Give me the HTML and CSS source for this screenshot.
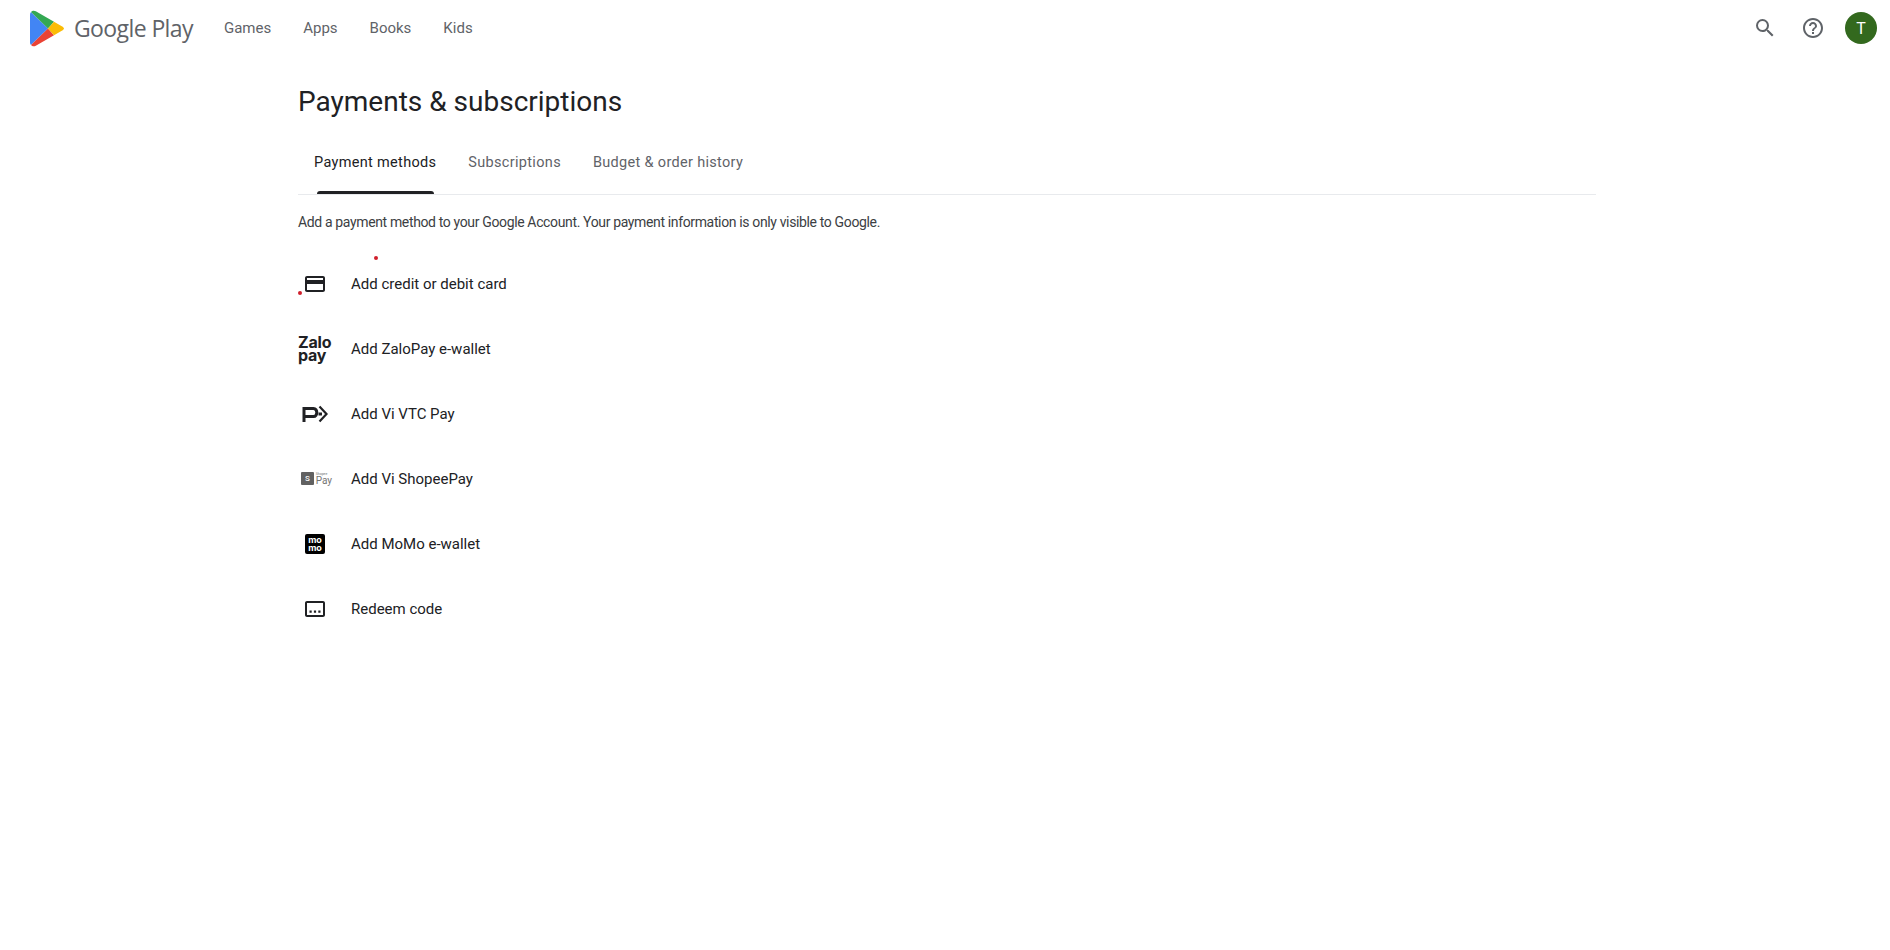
FILE: index.html
```html
<!DOCTYPE html>
<html lang="en">
<head>
<meta charset="utf-8">
<title>Payments &amp; subscriptions</title>
<link rel="stylesheet" href="styles.css">
</head>
<body>
<header class="topbar">
  <a class="brand">
    <svg class="play-logo" viewBox="0 0 34 37" width="34" height="37">
      <path fill="#4285f4" d="M1 1.900C.4 2.600 0 3.600 0 4.600v27.800c0 1 .4 2 1 2.700l17-16.600z"/>
      <path fill="#34a853" d="M1 1.900C2.200.6 4.100.2 5.800 1.200L24 11.700 18 18.500z"/>
      <path fill="#ea4335" d="M1 35.100c1.200 1.300 3.100 1.700 4.800.7L24 25.300l-6-6.800z"/>
      <path fill="#fbbc04" d="M24 11.700l7.800 4.500c2.900 1.700 2.900 3 0 4.600L24 25.300 18 18.500z"/>
    </svg>
    <span class="wordmark">Google Play</span>
  </a>
  <nav class="mainnav">
    <a>Games</a><a>Apps</a><a>Books</a><a>Kids</a>
  </nav>
  <div class="actions">
    <svg class="action-icon" viewBox="0 0 24 24" width="24" height="24"><path fill="#5f6368" d="M15.500 14h-.79l-.28-.27A6.470 6.470 0 0 0 16 9.500 6.500 6.500 0 1 0 9.500 16c1.610 0 3.090-.59 4.230-1.570l.27.28v.79l5 4.990L20.490 19l-4.990-5zm-6 0C7.010 14 5 11.990 5 9.500S7.010 5 9.500 5 14 7.010 14 9.500 11.990 14 9.500 14z"/></svg>
    <svg class="action-icon" viewBox="0 0 24 24" width="24" height="24"><path fill="#5f6368" d="M11 18h2v-2h-2v2zm1-16C6.480 2 2 6.480 2 12s4.480 10 10 10 10-4.480 10-10S17.520 2 12 2zm0 18c-4.410 0-8-3.590-8-8s3.590-8 8-8 8 3.590 8 8-3.590 8-8 8zm0-14c-2.210 0-4 1.790-4 4h2c0-1.100.9-2 2-2s2 .9 2 2c0 2-3 1.750-3 5h2c0-2.250 3-2.500 3-5 0-2.210-1.790-4-4-4z"/></svg>
    <span class="avatar">T</span>
  </div>
</header>
<main class="page">
  <h1 class="title">Payments &amp; subscriptions</h1>
  <div class="tabs">
    <a class="tab active">Payment methods</a>
    <a class="tab">Subscriptions</a>
    <a class="tab">Budget &amp; order history</a>
  </div>
  <p class="intro">Add a payment method to your Google Account. Your payment information is only visible to Google.</p>
  <ul class="methods">
    <li class="method">
      <span class="method-icon">
        <svg viewBox="0 0 24 24" width="24" height="24"><path fill="#202124" d="M20 4H4c-1.110 0-1.990.89-1.990 2L2 18c0 1.110.89 2 2 2h16c1.110 0 2-.89 2-2V6c0-1.110-.89-2-2-2zm0 14H4v-6h16v6zm0-10H4V6h16v2z"/></svg>
      </span>
      <span>Add credit or debit card</span>
    </li>
    <li class="method">
      <span class="method-icon zalo"><span>Zalo</span><span>pay</span></span>
      <span>Add ZaloPay e-wallet</span>
    </li>
    <li class="method">
      <span class="method-icon">
        <svg viewBox="0 0 28 18" width="28" height="18"><path fill="none" stroke="#202124" stroke-width="3" d="M3 17V3.500h9.500c4.400 0 4.400 8 0 8H3"/><path fill="none" stroke="#202124" stroke-width="2.200" d="M18.500 1.500 25.500 9l-7 7.500"/><path fill="#202124" d="M17.500 7.500h3.500v3h-3.500z"/></svg>
      </span>
      <span>Add Vi VTC Pay</span>
    </li>
    <li class="method">
      <span class="method-icon shopee">
        <span class="shopee-bag">S</span>
        <span class="shopee-text"><small>Shopee</small><b>Pay</b></span>
      </span>
      <span>Add Vi ShopeePay</span>
    </li>
    <li class="method">
      <span class="method-icon"><span class="momo"><span>mo</span><span>mo</span></span></span>
      <span>Add MoMo e-wallet</span>
    </li>
    <li class="method">
      <span class="method-icon">
        <svg viewBox="0 0 24 24" width="24" height="24"><path fill="#202124" d="M20 4H4c-1.100 0-2 .9-2 2v12c0 1.100.9 2 2 2h16c1.100 0 2-.9 2-2V6c0-1.100-.9-2-2-2zm0 14H4V6h16v12z"/><path fill="#202124" d="M6.500 13.500h2.200v2.200H6.500zM10.900 13.500h2.200v2.200h-2.200zM15.300 13.500h2.200v2.200h-2.200z"/></svg>
      </span>
      <span>Redeem code</span>
    </li>
    <li class="dot dot-a"></li>
    <li class="dot dot-b"></li>
  </ul>
</main>
</body>
</html>
```
FILE: styles.css
```css
* { box-sizing: border-box; }
html, body { margin: 0; height: 100%; background: #fff; overflow: hidden; }
body { font-family: Roboto, "Liberation Sans", sans-serif; color: #202124; }
.topbar { display: flex; align-items: center; height: 56px; padding: 0 13px 0 30px; }
.brand { display: flex; align-items: center; gap: 10px; }
.play-logo { display: block; }
.wordmark { font-family: "Open Sans", sans-serif; font-size: 23px; color: #5f6368; letter-spacing: -0.6px; }
.mainnav { display: flex; gap: 32px; margin-left: 31px; font-size: 15px; font-weight: 400; color: #5f6368; letter-spacing: 0; }
.actions { display: flex; align-items: center; gap: 24px; margin-left: auto; }
.action-icon { display: block; }
.avatar { display: flex; align-items: center; justify-content: center; width: 32px; height: 32px; margin-left: -4px; border-radius: 50%; background: #33691e; color: #fff; font-size: 16px; }
.page { width: 1298px; margin-left: 298px; }
.title { margin: 0; padding-top: 27px; font-size: 28px; line-height: 38px; font-weight: 400; color: #202124; }
.tabs { display: flex; height: 74px; border-bottom: 1px solid #e8eaed; padding-top: 6px; }
.tab { position: relative; display: flex; align-items: center; height: 67px; padding: 4px 16px 0; font-size: 14.500px; font-weight: 400; color: #5f6368; letter-spacing: .32px; }
.tab.active { color: #202124; }
.tab.active::after { content: ""; position: absolute; left: 19px; right: 18px; bottom: 0; height: 3px; background: #202124; border-radius: 3px 3px 0 0; }
.intro { margin: 17px 0 0; font-size: 14px; line-height: 20px; letter-spacing: -.36px; color: #3c4043; }
.methods { position: relative; list-style: none; margin: 19px 0 0; padding: 0; }
.method { display: flex; align-items: center; gap: 19px; height: 65px; font-size: 15px; font-weight: 400; color: #202124; }
.method-icon { display: flex; align-items: center; justify-content: center; width: 34px; flex: none; }
.zalo { flex-direction: column; align-items: flex-start; font-family: Inter, sans-serif; font-weight: 700; font-size: 16px; line-height: 13px; color: #202124; letter-spacing: -.2px; }
.shopee { gap: 2px; justify-content: flex-start; padding-left: 3px; color: #757575; }
.shopee-bag { display: flex; align-items: center; justify-content: center; width: 13px; height: 13px; background: #616161; color: #fff; font-size: 8px; font-weight: 500; border-radius: 1px; }
.shopee-text { display: flex; flex-direction: column; line-height: 1; }
.shopee-text small { font-size: 3.500px; line-height: 4px; }
.shopee-text b { font-size: 10px; line-height: 9px; font-weight: 400; }
.momo { display: flex; flex-direction: column; align-items: center; justify-content: center; width: 20px; height: 20px; background: #000; border-radius: 2px; color: #fff; font-family: Inter, sans-serif; font-size: 9px; line-height: 8px; font-weight: 700; }
.dot { position: absolute; width: 4px; height: 4px; border-radius: 50%; background: #d01f2c; }
.dot-a { left: 76px; top: 5px; }
.dot-b { left: 0; top: 40px; }
```
